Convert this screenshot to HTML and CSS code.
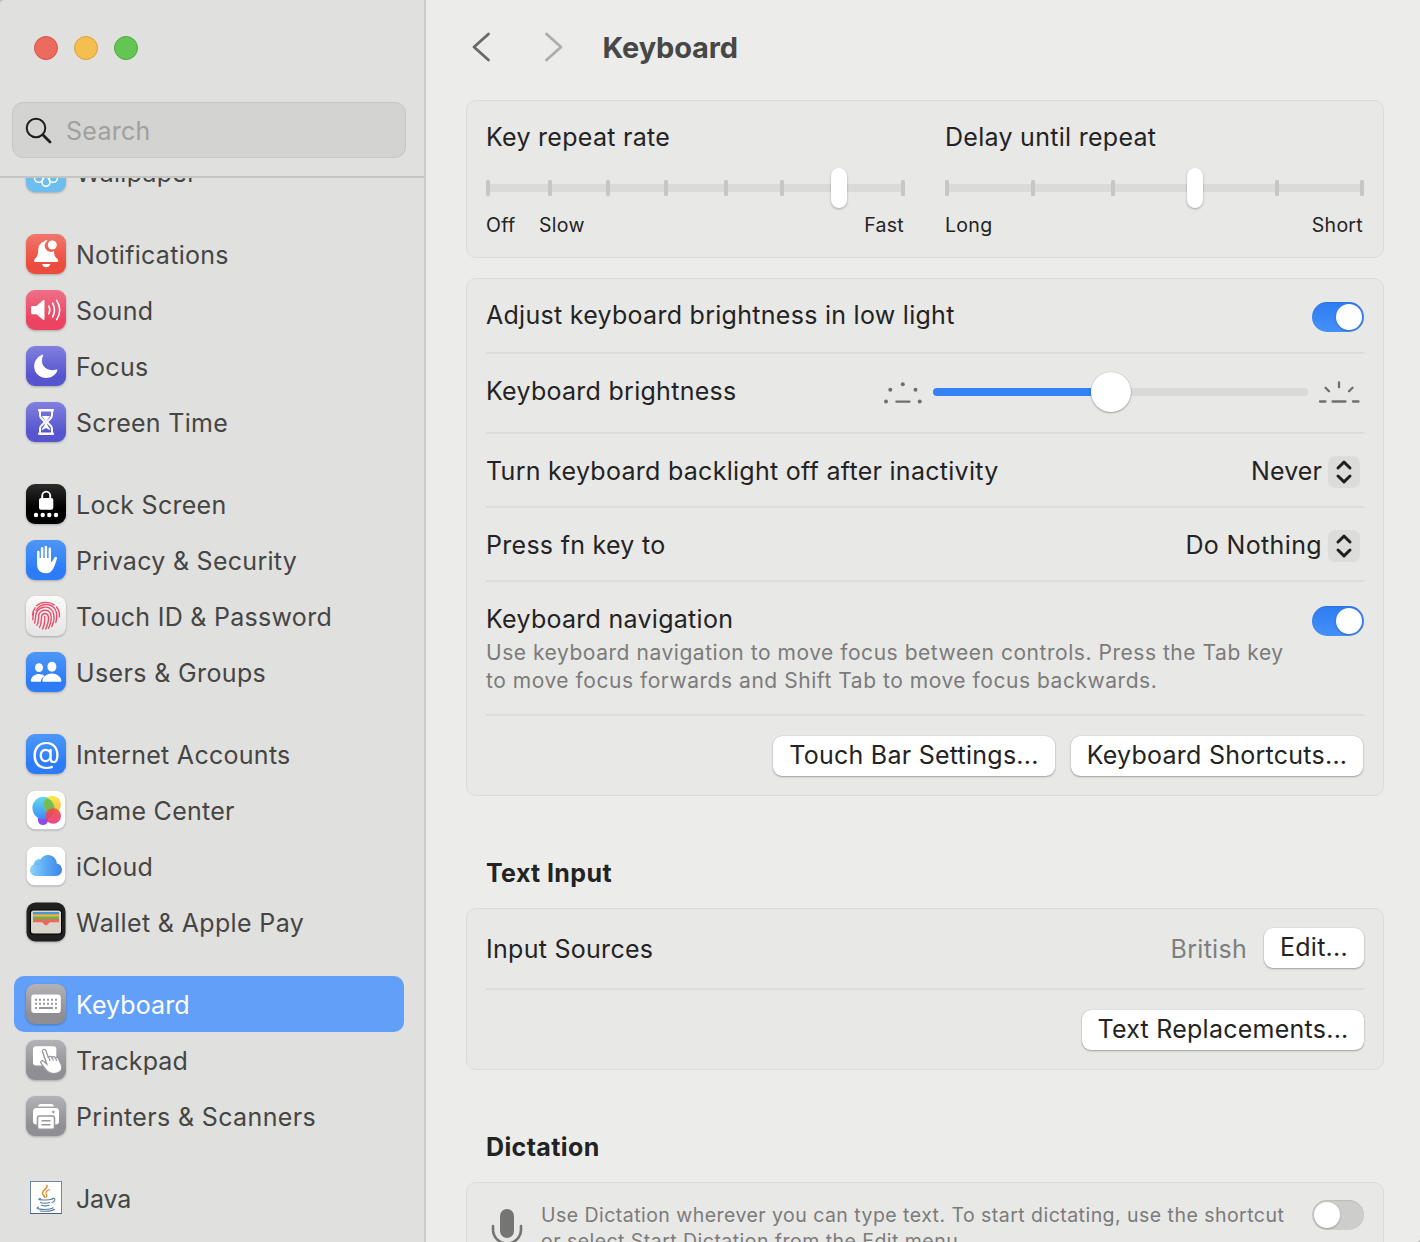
FILE: index.html
```html
<!DOCTYPE html>
<html lang="en">
<head>
<meta charset="utf-8">
<title>Keyboard</title>
<link rel="stylesheet" href="styles.css">
</head>
<body>
<svg class="defs" width="0" height="0" aria-hidden="true">
  <defs>
    <linearGradient id="g-red" x2="0" y2="1"><stop offset="0" stop-color="#f0776c"/><stop offset=".75" stop-color="#ec4c3d"/></linearGradient>
    <linearGradient id="g-pink" x2="0" y2="1"><stop offset="0" stop-color="#ef6f88"/><stop offset=".75" stop-color="#ec4460"/></linearGradient>
    <linearGradient id="g-indigo" x2="0" y2="1"><stop offset="0" stop-color="#8280e0"/><stop offset=".75" stop-color="#5655ce"/></linearGradient>
    <linearGradient id="g-black" x2="0" y2="1"><stop offset="0" stop-color="#2c2c2c"/><stop offset=".6" stop-color="#000"/></linearGradient>
    <linearGradient id="g-blue" x2="0" y2="1"><stop offset="0" stop-color="#4e97f8"/><stop offset=".75" stop-color="#2b7cf6"/></linearGradient>
    <linearGradient id="g-light" x2="0" y2="1"><stop offset="0" stop-color="#fbfbfb"/><stop offset="1" stop-color="#e4e4e4"/></linearGradient>
    <linearGradient id="g-gray" x2="0" y2="1"><stop offset="0" stop-color="#b3b2b7"/><stop offset=".75" stop-color="#8f8e93"/></linearGradient>
    <linearGradient id="g-cloud" x2="1" y2="0"><stop offset="0" stop-color="#8fd3fa"/><stop offset=".5" stop-color="#5aaaf2"/><stop offset="1" stop-color="#3f83ea"/></linearGradient>
    <linearGradient id="g-gcblue" x2="0" y2="1"><stop offset="0" stop-color="#62d9f2"/><stop offset="1" stop-color="#3f8bf5"/></linearGradient>
    <linearGradient id="g-gcyellow" x2="0" y2="1"><stop offset="0" stop-color="#fbe83c"/><stop offset="1" stop-color="#f5b030"/></linearGradient>
    <linearGradient id="g-gcred" x2="0" y2="1"><stop offset="0" stop-color="#f4503c"/><stop offset="1" stop-color="#e8387f"/></linearGradient>
  </defs>
</svg>
<div class="window">
  <aside class="sidebar">
    <header class="sidebar-head">
      <div class="lights"><i class="light close"></i><i class="light minimise"></i><i class="light zoom"></i></div>
      <div class="search">
        <svg width="28" height="28" viewBox="0 0 28 28" fill="none" stroke="#1e1e1e" stroke-linecap="round"><circle cx="11" cy="12" r="9.300" stroke-width="2"/><path d="M18 19l7 7" stroke-width="2.800"/></svg>
        <span>Search</span>
      </div>
    </header>
    <nav class="list">
      <ul class="group">
        <li class="item"><svg class="icon" viewBox="0 0 40 40"><rect width="40" height="40" rx="9" fill="#6dbdee"/><g fill="none" stroke="#fff" stroke-width="1.500"><circle cx="20" cy="9.500" r="4"/><circle cx="12.700" cy="13.500" r="4"/><circle cx="27.300" cy="13.500" r="4"/><circle cx="12.700" cy="26.200" r="4.100"/><circle cx="27.300" cy="26.200" r="4.100"/><path d="M20 23c-2.700 3.600-4 5.300-4 7.300a4 4 0 0 0 8 0c0-2-1.300-3.700-4-7.300z"/></g></svg><span>Wallpaper</span></li>
      </ul>
      <ul class="group">
        <li class="item"><svg class="icon" viewBox="0 0 40 40"><rect width="40" height="40" rx="9" fill="url(#g-red)"/><path fill="#fff" d="M21.500 6.700C20.500 6 19 6 18.300 7.400C14 8.700 12.300 12 12.200 16c-.1 4.500-.7 6.200-2.700 8.300C8.500 25.400 8 26 8 26.800C8 27.600 8.600 28 9.500 28h21.200c1 0 1.500-.5 1.500-1.200 0-.8-.5-1.400-1.500-2.500-2-2-2.700-3.600-2.700-7.400A6 6 0 0 1 21.500 6.700zM16 30h8.400c-.5 2-2.200 3.300-4.200 3.300S16.500 32 16 30z"/><circle cx="26.300" cy="11" r="4.500" fill="#fff"/></svg><span>Notifications</span></li>
        <li class="item"><svg class="icon" viewBox="0 0 40 40"><rect width="40" height="40" rx="9" fill="url(#g-pink)"/><path fill="#fff" d="M6.500 16H10.500l6.500-5.700c.8-.7 1.500-.3 1.500.6v18.200c0 .9-.7 1.300-1.500.6L10.500 24.300h-4C5.500 24.300 5 23.700 5 22.800v-5.300C5 16.500 5.500 16 6.500 16z"/><path d="M22.800 16.200q2 3.800 0 7.600M26.600 13.200q3.800 6.900 0 13.800M30.700 10.400q6 9.600 0 19.200" fill="none" stroke="#fff" stroke-width="1.600" stroke-linecap="round"/></svg><span>Sound</span></li>
        <li class="item"><svg class="icon" viewBox="0 0 40 40"><rect width="40" height="40" rx="9" fill="url(#g-indigo)"/><path fill="#fff" d="M16.400 8.700C11.500 10.500 8.200 15 8.200 20.300C8.200 27 13.500 32 20 32c5.200 0 9.500-2.700 11.300-7.500.3-.9-.3-1.200-1-1C22 26.500 12.500 20 17.100 9.600c.4-.8 0-1.200-.7-.9z"/></svg><span>Focus</span></li>
        <li class="item"><svg class="icon" viewBox="0 0 40 40"><rect width="40" height="40" rx="9" fill="url(#g-indigo)"/><g fill="none" stroke="#fff"><path stroke-width="2.600" stroke-linecap="round" stroke-linejoin="round" d="M13.200 8.300H26.800M13.200 31.700H26.800"/><path stroke-width="2" d="M14 9v4.500c0 3.500 4.500 4.500 4.500 6.500S14 23 14 26.500V31M26 9v4.500c0 3.500-4.500 4.500-4.500 6.500s4.500 3 4.500 6.500V31"/></g><path fill="#fff" d="M16 14h8c-1 2.500-3.300 3.200-3.300 6 0 3.500 2.800 5 3.800 8.500L20 26l-4.500 2.500c1-3.500 3.800-5 3.800-8.500 0-2.800-2.300-3.500-3.300-6z"/></svg><span>Screen Time</span></li>
      </ul>
      <ul class="group">
        <li class="item"><svg class="icon" viewBox="0 0 40 40"><rect width="40" height="40" rx="9" fill="url(#g-black)"/><rect x="13" y="14" width="14.300" height="11.700" rx="2" fill="#fff"/><path d="M16.200 15V11.800a4 4.200 0 0 1 8 0V15" fill="none" stroke="#fff" stroke-width="1.900"/><g fill="#fff"><circle cx="10" cy="31" r="2.200"/><circle cx="16.700" cy="31" r="2.200"/><circle cx="23.300" cy="31" r="2.200"/><circle cx="30" cy="31" r="2.200"/></g></svg><span>Lock Screen</span></li>
        <li class="item"><svg class="icon" viewBox="0 0 40 40"><rect width="40" height="40" rx="9" fill="url(#g-blue)"/><g fill="none" stroke="#fff" stroke-width="2.500" stroke-linecap="round"><path d="M12.300 12v11M16.100 8.300V20M19.900 7v13M23.800 8.800V21"/></g><path fill="#fff" d="M11.050 18H25v4.300c1-.5 2.400-2.700 3.300-4.600.7-1.400 3-1 2.600.7-.7 2.700-2 7-3.600 10-1.600 3.200-4 4.900-7.500 4.900-5.800 0-8.750-3.800-8.750-9.500z"/></svg><span>Privacy &amp; Security</span></li>
        <li class="item"><svg class="icon" viewBox="0 0 40 40"><rect width="40" height="40" rx="9" fill="url(#g-light)"/><g fill="none" stroke="#e8506a" stroke-width="1.400" stroke-linecap="round"><path d="M10.500 9.800C15 5.700 23 5.100 28.300 8.900M6.500 19C6.700 16 7.600 13.700 9 11.800M30.500 11c2.200 2.700 3.200 6 2.900 9.800"/><path d="M6.700 23.500c.5-3 .3-4.500.9-7M10 14.500C14.500 7 25 6.500 29.200 13.500c2.500 4.200 1.800 8.500.6 13"/><path d="M8.500 27c1.200-3.300.7-6 1.500-9 2.200-8 13.500-9.500 17-2 2.200 5 .8 10-1.200 14.500"/><path d="M11 29.300c1.800-3.800 1.200-6.300 1.700-9.500 1-6.500 9.500-7.500 11.800-2 1.700 4.500.3 9.700-2 14.500"/><path d="M13.500 31.500c2.200-4 1.700-7.500 2-10.500.5-4.500 6-4.500 6.800-.5.700 4-.7 8.500-2.700 12.500"/><path d="M16.500 32.800C18.700 29 19 25 18.800 20.500"/></g></svg><span>Touch ID &amp; Password</span></li>
        <li class="item"><svg class="icon" viewBox="0 0 40 40"><rect width="40" height="40" rx="9" fill="url(#g-blue)"/><g fill="#fff"><ellipse cx="13" cy="15.700" rx="4" ry="4.400"/><ellipse cx="25.900" cy="14.800" rx="4.500" ry="5"/><path d="M6 29.700c-1 0-1.400-.6-1.200-1.500C5.600 24.500 9 22 13 22c2 0 4 .7 5.500 1.900-2.200 1.500-3.500 3.500-3.700 5.800z"/><path d="M17.700 29.700c-1.100 0-1.500-.6-1.300-1.500.7-3.700 4.800-6.700 9.500-6.700s8.700 3 9.400 6.700c.2.900-.2 1.500-1.300 1.500z"/></g></svg><span class="wide">Users &amp; Groups</span></li>
      </ul>
      <ul class="group">
        <li class="item"><svg class="icon" viewBox="0 0 40 40"><rect width="40" height="40" rx="9" fill="url(#g-blue)"/><text x="20" y="29" class="at" text-anchor="middle">@</text></svg><span>Internet Accounts</span></li>
        <li class="item"><svg class="icon" viewBox="0 0 40 40"><rect x=".7" y=".7" width="38.600" height="38.600" rx="9" fill="#fff"/><circle cx="17" cy="29.800" r="5.200" fill="#8a4cf0"/><circle cx="17.600" cy="18" r="11.200" fill="url(#g-gcblue)"/><circle cx="26.200" cy="14.500" r="8.700" fill="url(#g-gcyellow)" opacity=".9"/><path d="M20.500 7.900A11.200 11.200 0 0 1 27.500 23 8.700 8.700 0 0 1 20.500 7.900z" fill="#5dbb58" opacity=".85"/><circle cx="27.200" cy="26" r="7.800" fill="url(#g-gcred)" opacity=".92"/></svg><span>Game Center</span></li>
        <li class="item"><svg class="icon" viewBox="0 0 40 40"><rect x=".7" y=".7" width="38.600" height="38.600" rx="8" fill="#fff"/><path fill="url(#g-cloud)" d="M10.500 30C6.500 30 4 27.400 4 24c0-2.700 1.500-4.700 4-5.600C7.700 15 11 12.400 14.500 13.500 16 10.500 18.700 9 22 9c5 0 8.700 3.700 8.800 8.600C34 18.200 36 20.600 36 23.700 36 27.300 33.400 30 29.700 30z"/><path d="M8 18.400C10 17.600 12 18 13.500 19M14.500 13.500c1.500.6 2 1.500 2.300 3" fill="none" stroke="#3f9be9" stroke-width=".8" opacity=".6"/></svg><span>iCloud</span></li>
        <li class="item"><svg class="icon" viewBox="0 0 40 40"><rect x=".5" y=".5" width="39" height="39" rx="9" fill="#202020"/><rect x="4" y="7.500" width="32" height="25" rx="3" fill="#000"/><rect x="5" y="8.500" width="30" height="23" rx="2.500" fill="#d9d6cb"/><path fill="#4a98d3" d="M7 10h26v3H7z"/><path fill="#f0b03c" d="M7 12.300h26v3H7z"/><path fill="#5fb550" d="M7 14.700h26v3H7z"/><path fill="#e9695a" d="M7 17h26v3.200h-8.500c-1.300 0-1.800.8-2.500 2a2.500 2.500 0 0 1-4 0c-.7-1.200-1.200-2-2.500-2H7z"/></svg><span class="wide">Wallet &amp; Apple Pay</span></li>
      </ul>
      <ul class="group">
        <li class="item selected"><svg class="icon" viewBox="0 0 40 40"><rect width="40" height="40" rx="9" fill="url(#g-gray)"/><rect x="5.300" y="10.500" width="29.500" height="18.500" rx="3" fill="#fff"/><g stroke="#98979b" stroke-width="2" fill="none"><path d="M9 15.800H31M9 19.800H31" stroke-dasharray="2 2"/><path d="M9 24h2M13 24h14M29 24h2"/></g></svg><span class="tight">Keyboard</span></li>
        <li class="item"><svg class="icon" viewBox="0 0 40 40"><rect width="40" height="40" rx="9" fill="url(#g-gray)"/><rect x="7" y="6.300" width="23.300" height="19.200" rx="3" fill="#fff"/><path fill="#fff" stroke="#98979b" stroke-width="1.300" d="M16.500 11.500c-.6-2 2.700-3 3.400-1l2.500 7.300c.2-1.700 3-1.900 3.500-.2.700-1.500 3.200-1.200 3.500.5.900-1.300 2.700-.7 3.200.9L35 24c2.800 6.300-1.700 9.800-7.500 9.600-5 0-7-2.500-9-5.700-1.500-2-2.300-3.300-3.300-4.600-1.400-2 .8-3.400 2.400-2l3.200 2.700z"/><path d="M23 18l1 3M26.500 18l.8 2.700M30 18.800l.6 2" stroke="#98979b" stroke-width="1.200"/></svg><span class="tight">Trackpad</span></li>
        <li class="item"><svg class="icon" viewBox="0 0 40 40"><rect width="40" height="40" rx="9" fill="url(#g-gray)"/><path fill="#fff" d="M12 10.500c.3-1.700 1.400-2.500 3-2.500h10c1.700 0 2.700.8 3 2.500z"/><rect x="7" y="12" width="26" height="16.500" rx="3.500" fill="#fff"/><circle cx="27.400" cy="16" r="1.300" fill="#98979b"/><rect x="11.500" y="20" width="17" height="13.300" rx="2" fill="#fff" stroke="#98979b" stroke-width="1.500"/><path d="M15.500 24.700h9M15.500 28.700h9" stroke="#98979b" stroke-width="1.500"/></svg><span class="wide">Printers &amp; Scanners</span></li>
      </ul>
      <ul class="group">
        <li class="item"><svg class="icon flat" viewBox="0 0 40 40"><rect x="4.500" y="3.500" width="31" height="32" fill="#fff" stroke="#7089aa"/><path d="M4 35.500h32" stroke="#4d6188"/><g fill="none" stroke="#e58a2e" stroke-linecap="round"><path d="M21 7.500c1 3-5 4.500-4.500 7.800.2 1.700 2 2.200 2 4" stroke-width="1.500"/><path d="M23.500 11.500c-3.500 1.500-4.500 3-3 5 .8 1.300.3 2.200-.5 3" stroke-width="1.200"/></g><g fill="none" stroke="#527a9d" stroke-width="1.100" stroke-linecap="round"><path d="M14.500 20.500c-4 .8-.5 1.700 5 1.500 3 0 5.500-.5 7-1M26 20.500c4-1 3.500 3 0 4M14.500 24.500c2 1 6.500 1 9 0M15.500 27.200c2 .8 5 .8 7.500 0M12.500 29c-5 2 5 3 11 2 2-.3 3.500-.8 3.500-1.500M14 33c5 .5 12 .2 14.500-1.700"/></g></svg><span class="tighter">Java</span></li>
      </ul>
    </nav>
  </aside>

  <main class="content">
    <header class="toolbar">
      <svg class="chevron back" width="20" height="32" viewBox="0 0 20 32"><path d="M17.500 3L3 16l14.500 13"/></svg>
      <svg class="chevron forward" width="20" height="32" viewBox="0 0 20 32"><path d="M2.500 3L17 16 2.500 29"/></svg>
      <h1>Keyboard</h1>
    </header>

    <section class="card sliders">
      <div class="tick-slider">
        <h3>Key repeat rate</h3>
        <svg width="420" height="44" viewBox="0 0 420 44"><rect x="1" y="16" width="416" height="8" fill="#dadad8"/><g fill="#c6c6c5"><rect y="12" width="4" height="16" rx="1.500"/><rect x="62" y="12" width="4" height="16" rx="1.500"/><rect x="120" y="12" width="4" height="16" rx="1.500"/><rect x="178" y="12" width="4" height="16" rx="1.500"/><rect x="238" y="12" width="4" height="16" rx="1.500"/><rect x="294" y="12" width="4" height="16" rx="1.500"/><rect x="415" y="12" width="4" height="16" rx="1.500"/></g><rect class="thumb" x="345" width="16" height="40" rx="8"/></svg>
        <div class="scale"><span class="first">Off</span><span>Slow</span><span class="last">Fast</span></div>
      </div>
      <div class="tick-slider">
        <h3>Delay until repeat</h3>
        <svg width="420" height="44" viewBox="0 0 420 44"><rect x="1" y="16" width="416" height="8" fill="#dadad8"/><g fill="#c6c6c5"><rect y="12" width="4" height="16" rx="1.500"/><rect x="86" y="12" width="4" height="16" rx="1.500"/><rect x="166" y="12" width="4" height="16" rx="1.500"/><rect x="330" y="12" width="4" height="16" rx="1.500"/><rect x="415" y="12" width="4" height="16" rx="1.500"/></g><rect class="thumb" x="242" width="16" height="40" rx="8"/></svg>
        <div class="scale"><span>Long</span><span class="last">Short</span></div>
      </div>
    </section>

    <section class="card settings">
      <div class="row r-adjust"><span>Adjust keyboard brightness in low light</span><i class="toggle on"></i></div>
      <div class="row r-bright">
        <span class="grow">Keyboard brightness</span>
        <svg width="40" height="24" viewBox="0 0 40 24" fill="#6f6f6e"><circle cx="2" cy="20.500" r="2"/><circle cx="6.300" cy="8.800" r="2"/><circle cx="18.800" cy="3.300" r="2"/><circle cx="31.500" cy="8.800" r="2"/><circle cx="35.700" cy="20.500" r="2"/><rect x="11.200" y="19.500" width="15.500" height="2.200" rx="1.100"/></svg>
        <div class="level"><i class="level-fill"></i><i class="level-knob"></i></div>
        <svg width="42" height="24" viewBox="0 0 42 24" fill="none" stroke="#6f6f6e" stroke-width="2.300" stroke-linecap="round"><path d="M2 21.500h5.500M14.500 21.500H27.500M35 21.500h5.500M21 2.300v5M7.500 7.700l3.500 3.600M34.500 7.700L31 11.300"/></svg>
      </div>
      <div class="row r-select"><span class="grow">Turn keyboard backlight off after inactivity</span><span class="tight">Never</span><svg class="stepper" viewBox="0 0 32 32"><path d="M10 12l6-5.800 6 5.800M10 20l6 5.800 6-5.800"/></svg></div>
      <div class="row r-select"><span class="grow">Press fn key to</span><span class="wide">Do Nothing</span><svg class="stepper" viewBox="0 0 32 32"><path d="M10 12l6-5.800 6 5.800M10 20l6 5.800 6-5.800"/></svg></div>
      <div class="row r-nav">
        <div class="grow"><div class="nav-title">Keyboard navigation</div><p>Use keyboard navigation to move focus between controls. Press the Tab key<br>to move focus forwards and Shift Tab to move focus backwards.</p></div>
        <i class="toggle on"></i>
      </div>
      <div class="row r-buttons"><button class="b-touch">Touch Bar Settings...</button><button class="b-short">Keyboard Shortcuts...</button></div>
    </section>

    <h2>Text Input</h2>
    <section class="card">
      <div class="row r-input"><span class="grow">Input Sources</span><span class="muted">British</span><button class="b-edit">Edit...</button></div>
      <div class="row r-replace"><button class="b-text">Text Replacements...</button></div>
    </section>

    <h2>Dictation</h2>
    <section class="card dictation">
      <svg class="mic" width="32" height="44" viewBox="0 0 32 44"><rect x="9" y="1" width="14" height="29" rx="7" fill="#757574"/><path d="M2 18v3.500a14 14 0 0 0 28 0V18M16 36v6" fill="none" stroke="#757574" stroke-width="2.600" stroke-linecap="round"/></svg>
      <p class="small grow">Use Dictation wherever you can type text. To start dictating, use the shortcut<br>or select Start Dictation from the Edit menu.</p>
      <i class="toggle"></i>
    </section>
  </main>
</div>
</body>
</html>
```

FILE: styles.css
```css
* { box-sizing: border-box; margin: 0; padding: 0; }
html { background: #b9b9b8; }
body {
  height: 1242px;
  overflow: hidden;
  font: 400 25px/32px Inter, "Liberation Sans", sans-serif;
  letter-spacing: .28px;
  color: #232323;
}
.defs { display: block; height: 0; }
.window {
  display: flex;
  width: 1420px;
  height: 1242px;
  overflow: hidden;
  border-radius: 4px 0 4px 0;
}
svg { display: block; flex: none; }
.grow { flex: 1; }
.wide { letter-spacing: .36px; }
.tight { letter-spacing: .1px; }
.tighter { letter-spacing: -.2px; }

.sidebar {
  display: flex;
  flex-direction: column;
  flex: none;
  width: 426px;
  background: #e0e0de;
  border-right: 2px solid #cbcbc9;
}
.sidebar-head {
  flex: none;
  height: 178px;
  padding: 36px 18px 0 12px;
  border-bottom: 2px solid #c4c4c2;
}
.lights { display: flex; gap: 16px; padding-left: 22px; }
.light { width: 24px; height: 24px; border-radius: 50%; border: 1px solid; }
.close { background: #ed6a5e; border-color: #d5534a; }
.minimise { background: #f5bf4f; border-color: #d9a13c; }
.zoom { background: #62c554; border-color: #51a842; }
.search {
  display: flex;
  align-items: center;
  gap: 13px;
  height: 56px;
  margin-top: 42px;
  padding-left: 12px;
  border: 1px solid #c6c6c4;
  border-radius: 11px;
  background: #d3d3d1;
  color: #a0a09e;
}
.search span { padding-top: 2px; }
.list { flex: 1; overflow: hidden; padding: 0 20px 0 14px; }
.group { list-style: none; margin-bottom: 26px; }
.group:first-child { margin-top: -34px; }
.item {
  display: flex;
  align-items: center;
  gap: 10px;
  height: 56px;
  padding-left: 12px;
  border-radius: 10px;
  color: #454544;
}
.item span { padding-top: 2px; }
.selected { background: #629ff8; color: #fff; }
.icon { width: 40px; height: 40px; overflow: visible; filter: drop-shadow(0 1px 1px rgba(0,0,0,.25)); }
.flat { filter: none; }
.at { font: 400 29.500px Inter, sans-serif; letter-spacing: 0; fill: #fff; }

.content { flex: 1; min-width: 0; background: #ececea; padding: 0 36px 0 40px; }
.toolbar { display: flex; align-items: center; height: 100px; padding: 0 0 6px 5px; }
.chevron { fill: none; stroke-width: 2.800; stroke-linecap: round; stroke-linejoin: round; }
.back { stroke: #686867; }
.forward { stroke: #adadab; margin-left: 53px; }
.toolbar h1 { margin-left: 38.500px; font-size: 29px; font-weight: 700; letter-spacing: -.15px; color: #474746; padding-top: 2px; }

.card {
  border: 1px solid #dbdbd9;
  border-radius: 10px;
  background: #e8e8e6;
  padding: 1px 19px;
}
.sliders { display: flex; justify-content: space-between; height: 158px; padding-top: 20px; }
.tick-slider { width: 419px; }
.tick-slider h3 { font-size: 25px; font-weight: 400; line-height: 32px; margin-bottom: 15px; }
.thumb { fill: #fff; filter: drop-shadow(0 1px 1px rgba(0,0,0,.3)); }
.scale { display: flex; font-size: 19.500px; line-height: 26px; letter-spacing: .3px; }
.first { width: 53px; }
.last { margin-left: auto; padding-right: 1px; }

.settings { height: 518px; margin-top: 20px; }
.row { display: flex; align-items: center; justify-content: space-between; border-bottom: 2px solid #dcdcda; }
.row:last-child { border-bottom: 0; }
.r-adjust { height: 74px; }
.r-adjust span { padding-bottom: 2px; }
.r-adjust .toggle { margin-top: 2px; }
.r-bright { height: 80px; padding-bottom: 2px; }
.r-bright span { padding-bottom: 2px; }
.r-bright > svg { margin-top: 1px; }
.r-bright > svg:last-child { margin: 0 4px 0 10px; }
.r-select { height: 74px; padding-top: 2px; }
.r-nav { height: 134px; align-items: flex-start; padding-top: 21px; }
.r-nav .toggle { margin-top: 3px; }
.r-buttons { height: 79px; padding-right: 1px; justify-content: flex-end; gap: 16px; }
.toggle {
  flex: none;
  width: 52px;
  height: 30px;
  padding: 2px;
  border-radius: 15px;
  background: #cdcdcc;
  box-shadow: inset 0 1px 1px rgba(0,0,0,.08);
}
.toggle::before {
  content: "";
  display: block;
  width: 26px;
  height: 26px;
  border-radius: 50%;
  background: #fff;
  box-shadow: 0 1px 2px rgba(0,0,0,.25);
}
.on { background: linear-gradient(#2d7cf2, #4690f8); }
.on::before { margin-left: auto; }
.level {
  display: flex;
  align-items: center;
  width: 375px;
  height: 8px;
  margin-left: 9px;
  border-radius: 4px;
  background: #d9d9d7;
}
.level-fill { width: 158px; height: 8px; border-radius: 4px 0 0 4px; background: #3281f7; }
.level-knob {
  width: 40px;
  height: 40px;
  border-radius: 50%;
  background: #fff;
  box-shadow: 0 1px 2px rgba(0,0,0,.3), 0 0 1px rgba(0,0,0,.25);
}
.stepper {
  width: 32px;
  height: 32px;
  margin: 1px 4px 0 6px;
  border-radius: 7px;
  background: #dcdcda;
  fill: none;
  stroke: #1f1f1f;
  stroke-width: 3;
  stroke-linecap: round;
  stroke-linejoin: round;
}
p { font-size: 21px; line-height: 28px; letter-spacing: .54px; color: #7b7b7a; white-space: nowrap; }
.small { font-size: 19.500px; line-height: 26px; letter-spacing: .46px; }
.nav-title { margin-bottom: 4px; }
button {
  height: 40px;
  padding-bottom: 2px;
  border: 0;
  border-radius: 9px;
  background: #fff;
  font: inherit;
  letter-spacing: .25px;
  color: #232323;
  white-space: nowrap;
  box-shadow: 0 1px 2px rgba(0,0,0,.3), 0 0 1px rgba(0,0,0,.25);
}
.b-touch { width: 282px; }
.b-short { width: 292px; }
.b-edit { width: 100px; margin-left: 17px; margin-bottom: 2px; }
.b-text { width: 282px; }
h2 { font-size: 25px; line-height: 32px; font-weight: 700; letter-spacing: .38px; padding: 61px 0 19px 20px; }
.muted { color: #7e7e7d; }
.r-input { height: 80px; }
.r-replace { height: 78px; padding-top: 2px; justify-content: flex-end; }
.dictation { display: flex; align-items: flex-start; height: 200px; padding-top: 18px; }
.dictation p { padding-top: 1px; }
.dictation .toggle { margin-top: -1px; }
.mic { margin: 7px 18px 0 5px; }
```
